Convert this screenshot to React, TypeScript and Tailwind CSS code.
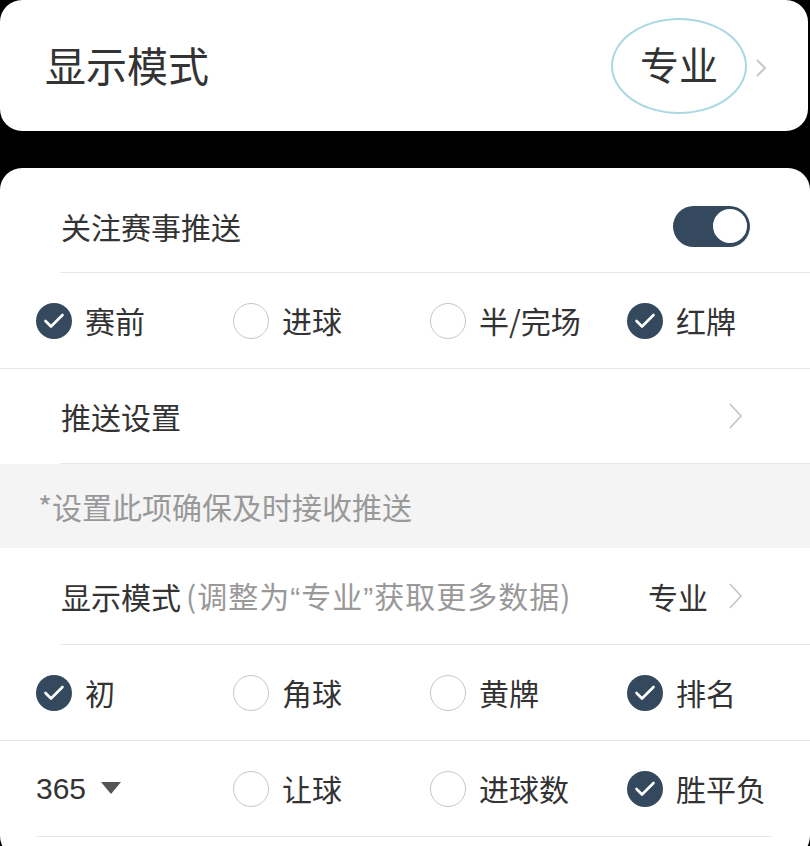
import type { ReactNode } from 'react';

const FONT = { fontFamily: '"Noto Sans CJK SC", "Noto Sans", sans-serif' };
const LATIN = { fontFamily: '"Liberation Sans", Arial, sans-serif' };

const ROW_A = [
  { label: '赛前', on: true },
  { label: '进球', on: false },
  { label: '半/完场', on: false },
  { label: '红牌', on: true },
];

const ROW_B = [
  { label: '初', on: true },
  { label: '角球', on: false },
  { label: '黄牌', on: false },
  { label: '排名', on: true },
];

const ROW_C = [
  { label: '让球', on: false },
  { label: '进球数', on: false },
  { label: '胜平负', on: true },
];

function Chevron({ small }: { small?: boolean }) {
  return small ? (
    <svg width="12" height="20" viewBox="0 0 12 20" fill="none">
      <path d="M2 2l8 8-8 8" stroke="#c8c8c8" strokeWidth="2" />
    </svg>
  ) : (
    <svg width="16" height="28" viewBox="0 0 16 28" fill="none">
      <path d="M2 2l11 12L2 26" stroke="#c4c4c4" strokeWidth="1.6" />
    </svg>
  );
}

function Check({ on, label }: { on: boolean; label: string }) {
  return (
    <div className="flex items-center gap-[13px]">
      {on ? (
        <div className="w-[36px] h-[36px] rounded-full bg-[#34495e] flex items-center justify-center">
          <svg width="22" height="18" viewBox="0 0 22 18" fill="none">
            <path d="M2.5 9l5.5 5.5L19.5 3" stroke="#fff" strokeWidth="2.6" strokeLinecap="round" strokeLinejoin="round" />
          </svg>
        </div>
      ) : (
        <div className="w-[36px] h-[36px] rounded-full border-[1.5px] border-[#c6c6c6] bg-white" />
      )}
      <span className="text-[30px] text-[#333]">{label}</span>
    </div>
  );
}

function Row({ children, className = '' }: { children: ReactNode; className?: string }) {
  return <div className={`flex items-center ${className}`}>{children}</div>;
}

export default function App() {
  return (
    <div className="w-[810px] h-[846px] bg-black overflow-hidden" style={FONT}>
      {/* top card */}
      <div className="w-[808px] h-[131px] bg-white rounded-[22px] flex items-center pl-[45px] pr-[41px]">
        <span className="text-[41px] text-[#333] flex-1 pb-[2px]">显示模式</span>
        <div className="flex items-center">
          <div className="w-[136px] h-[96px] rounded-[50%] border-2 border-[#a9d8e2] flex items-center justify-center">
            <span className="text-[39px] text-[#333] pb-[4px]">专业</span>
          </div>
          <div className="ml-[8px] mt-[4px]">
            <Chevron small />
          </div>
        </div>
      </div>

      {/* settings card */}
      <div className="mt-[37px] bg-white rounded-[22px] h-[690px]">
        <Row className="h-[104px] pt-[12px] pl-[61px] pr-[60px] justify-between">
          <span className="text-[30px] text-[#333]">关注赛事推送</span>
          <div className="w-[77px] h-[41px] rounded-full bg-[#34495e] flex items-center justify-end pr-[1px]">
            <div className="w-[38px] h-[38px] rounded-full bg-white border-2 border-[#34495e]" />
          </div>
        </Row>
        <div className="ml-[60px] h-px bg-[#e8e8e8]" />

        <Row className="h-[95px] pl-[36px] grid grid-cols-[197px_197px_197px_1fr]">
          {ROW_A.map(c => (
            <Check key={c.label} on={c.on} label={c.label} />
          ))}
        </Row>
        <div className="h-px bg-[#e8e8e8]" />

        <Row className="h-[94px] pl-[61px] pr-[66px] justify-between">
          <span className="text-[30px] text-[#333]">推送设置</span>
          <Chevron />
        </Row>
        <div className="ml-[60px] h-px bg-[#e8e8e8]" />

        <Row className="h-[84px] pl-[38px] bg-[#f4f4f4]">
          <span className="text-[30px] text-[#999]">*设置此项确保及时接收推送</span>
        </Row>

        <Row className="h-[96px] pl-[61px] pr-[66px]">
          <span className="text-[30px] text-[#333]">显示模式</span>
          <span className="text-[30px] text-[#999] flex-1 ml-[5px] tracking-[1px]">
            (调整为<span style={LATIN}>“</span>专业<span style={LATIN}>”</span>获取更多数据)
          </span>
          <span className="text-[30px] text-[#333] mr-[20px]">专业</span>
          <Chevron />
        </Row>
        <div className="ml-[60px] h-px bg-[#e8e8e8]" />

        <Row className="h-[95px] pl-[36px] grid grid-cols-[197px_197px_197px_1fr]">
          {ROW_B.map(c => (
            <Check key={c.label} on={c.on} label={c.label} />
          ))}
        </Row>
        <div className="h-px bg-[#e8e8e8]" />

        <Row className="h-[95px] pl-[36px] grid grid-cols-[197px_197px_197px_1fr]">
          <div className="flex items-center gap-[15px]">
            <span className="text-[30px] text-[#333]" style={LATIN}>
              365
            </span>
            <svg width="20" height="13" viewBox="0 0 20 13">
              <path d="M0 0h20L10 12z" fill="#555" />
            </svg>
          </div>
          {ROW_C.map(c => (
            <Check key={c.label} on={c.on} label={c.label} />
          ))}
        </Row>
        <div className="ml-[36px] mr-[38px] h-px bg-[#e8e8e8]" />
      </div>
    </div>
  );
}
